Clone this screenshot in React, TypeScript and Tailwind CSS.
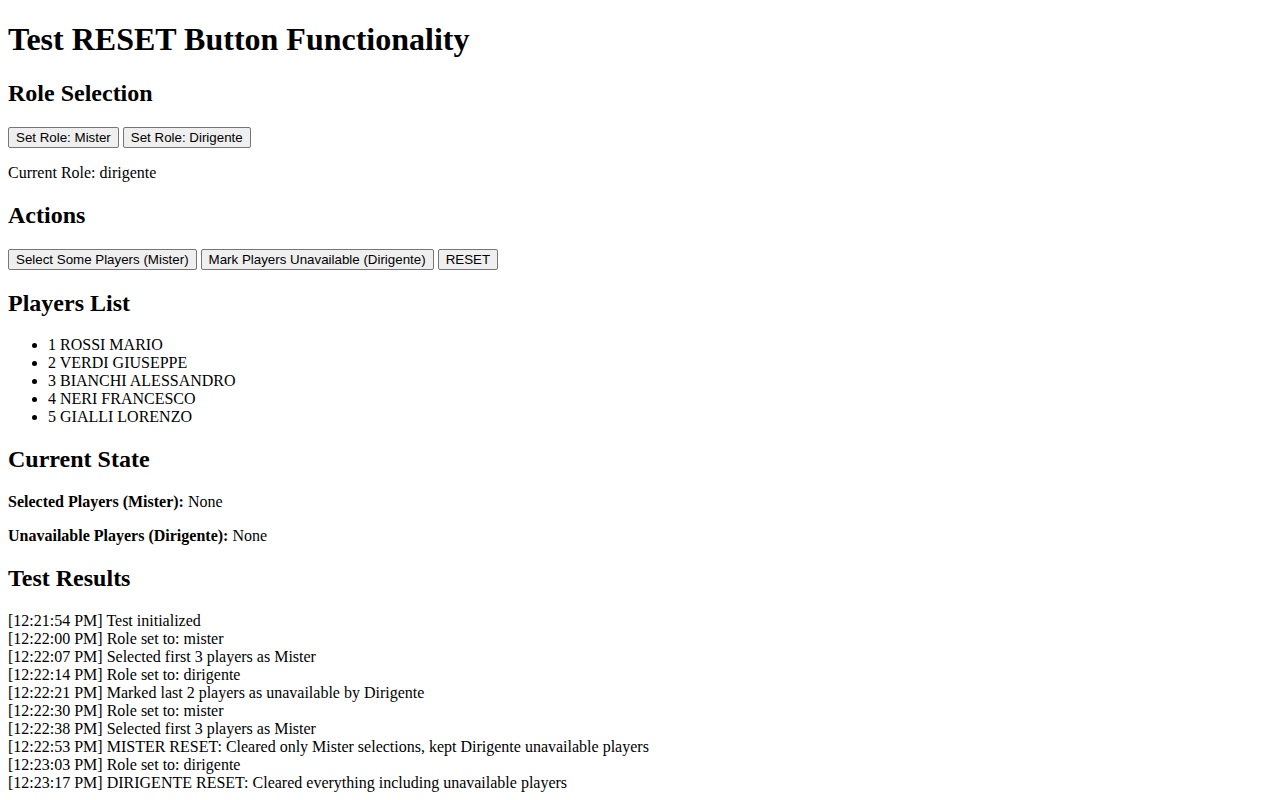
import { useState } from 'react';

const players = [
  { id: 1, name: 'ROSSI MARIO' },
  { id: 2, name: 'VERDI GIUSEPPE' },
  { id: 3, name: 'BIANCHI ALESSANDRO' },
  { id: 4, name: 'NERI FRANCESCO' },
  { id: 5, name: 'GIALLI LORENZO' },
];

const initialLog = [
  '[12:21:54 PM] Test initialized',
  '[12:22:00 PM] Role set to: mister',
  '[12:22:07 PM] Selected first 3 players as Mister',
  '[12:22:14 PM] Role set to: dirigente',
  '[12:22:21 PM] Marked last 2 players as unavailable by Dirigente',
  '[12:22:30 PM] Role set to: mister',
  '[12:22:38 PM] Selected first 3 players as Mister',
  '[12:22:53 PM] MISTER RESET: Cleared only Mister selections, kept Dirigente unavailable players',
  '[12:23:03 PM] Role set to: dirigente',
  '[12:23:17 PM] DIRIGENTE RESET: Cleared everything including unavailable players',
];

function Btn({ children, onClick }: { children: React.ReactNode; onClick?: () => void }) {
  return (
    <button
      onClick={onClick}
      className="font-['Liberation_Sans',Arial,sans-serif] text-[13.33px] leading-[15px] px-[7px] py-[2px] bg-[#efefef] border border-[#767676] rounded-[2px] text-black hover:bg-[#e5e5e5]"
    >
      {children}
    </button>
  );
}

export default function App() {
  const [role, setRole] = useState('dirigente');
  const [selected, setSelected] = useState<number[]>([]);
  const [unavailable, setUnavailable] = useState<number[]>([]);
  const [log, setLog] = useState(initialLog);

  const addLog = (msg: string) => {
    const t = new Date().toLocaleTimeString('en-US');
    setLog((l) => [...l, `[${t}] ${msg}`]);
  };

  const nameOf = (ids: number[]) =>
    ids.length ? ids.map((id) => players.find((p) => p.id === id)?.name).join(', ') : 'None';

  return (
    <div className="font-['Liberation_Serif','Times_New_Roman',serif] text-black bg-white leading-[normal] px-2 pb-2 min-h-[800px]">
      <h1 className="text-[32px] font-bold pt-[21px] mb-[22px]">Test RESET Button Functionality</h1>

      <h2 className="text-[24px] font-bold mb-[20px]">Role Selection</h2>
      <div className="flex gap-[4px]">
        <Btn onClick={() => { setRole('mister'); addLog('Role set to: mister'); }}>Set Role: Mister</Btn>
        <Btn onClick={() => { setRole('dirigente'); addLog('Role set to: dirigente'); }}>Set Role: Dirigente</Btn>
      </div>
      <p className="my-4">Current Role: {role}</p>

      <h2 className="text-[24px] font-bold mt-[20px] mb-[20px]">Actions</h2>
      <div className="flex gap-[4px]">
        <Btn onClick={() => { setSelected([1, 2, 3]); addLog('Selected first 3 players as Mister'); }}>
          Select Some Players (Mister)
        </Btn>
        <Btn onClick={() => { setUnavailable([4, 5]); addLog('Marked last 2 players as unavailable by Dirigente'); }}>
          Mark Players Unavailable (Dirigente)
        </Btn>
        <Btn
          onClick={() => {
            setSelected([]);
            if (role === 'dirigente') {
              setUnavailable([]);
              addLog('DIRIGENTE RESET: Cleared everything including unavailable players');
            } else {
              addLog('MISTER RESET: Cleared only Mister selections, kept Dirigente unavailable players');
            }
          }}
        >
          RESET
        </Btn>
      </div>

      <h2 className="text-[24px] font-bold mt-[20px] mb-[19px]">Players List</h2>
      <ul className="list-disc pl-10 my-4">
        {players.map((p) => (
          <li key={p.id}>
            {p.id} {p.name}
          </li>
        ))}
      </ul>

      <h2 className="text-[24px] font-bold mt-[20px] mb-[20px]">Current State</h2>
      <p className="my-4">
        <strong className="font-bold">Selected Players (Mister):</strong> {nameOf(selected)}
      </p>
      <p className="my-4">
        <strong className="font-bold">Unavailable Players (Dirigente):</strong> {nameOf(unavailable)}
      </p>

      <h2 className="text-[24px] font-bold mt-[20px] mb-[20px]">Test Results</h2>
      <div>
        {log.map((line, i) => (
          <div key={i}>{line}</div>
        ))}
      </div>
    </div>
  );
}
